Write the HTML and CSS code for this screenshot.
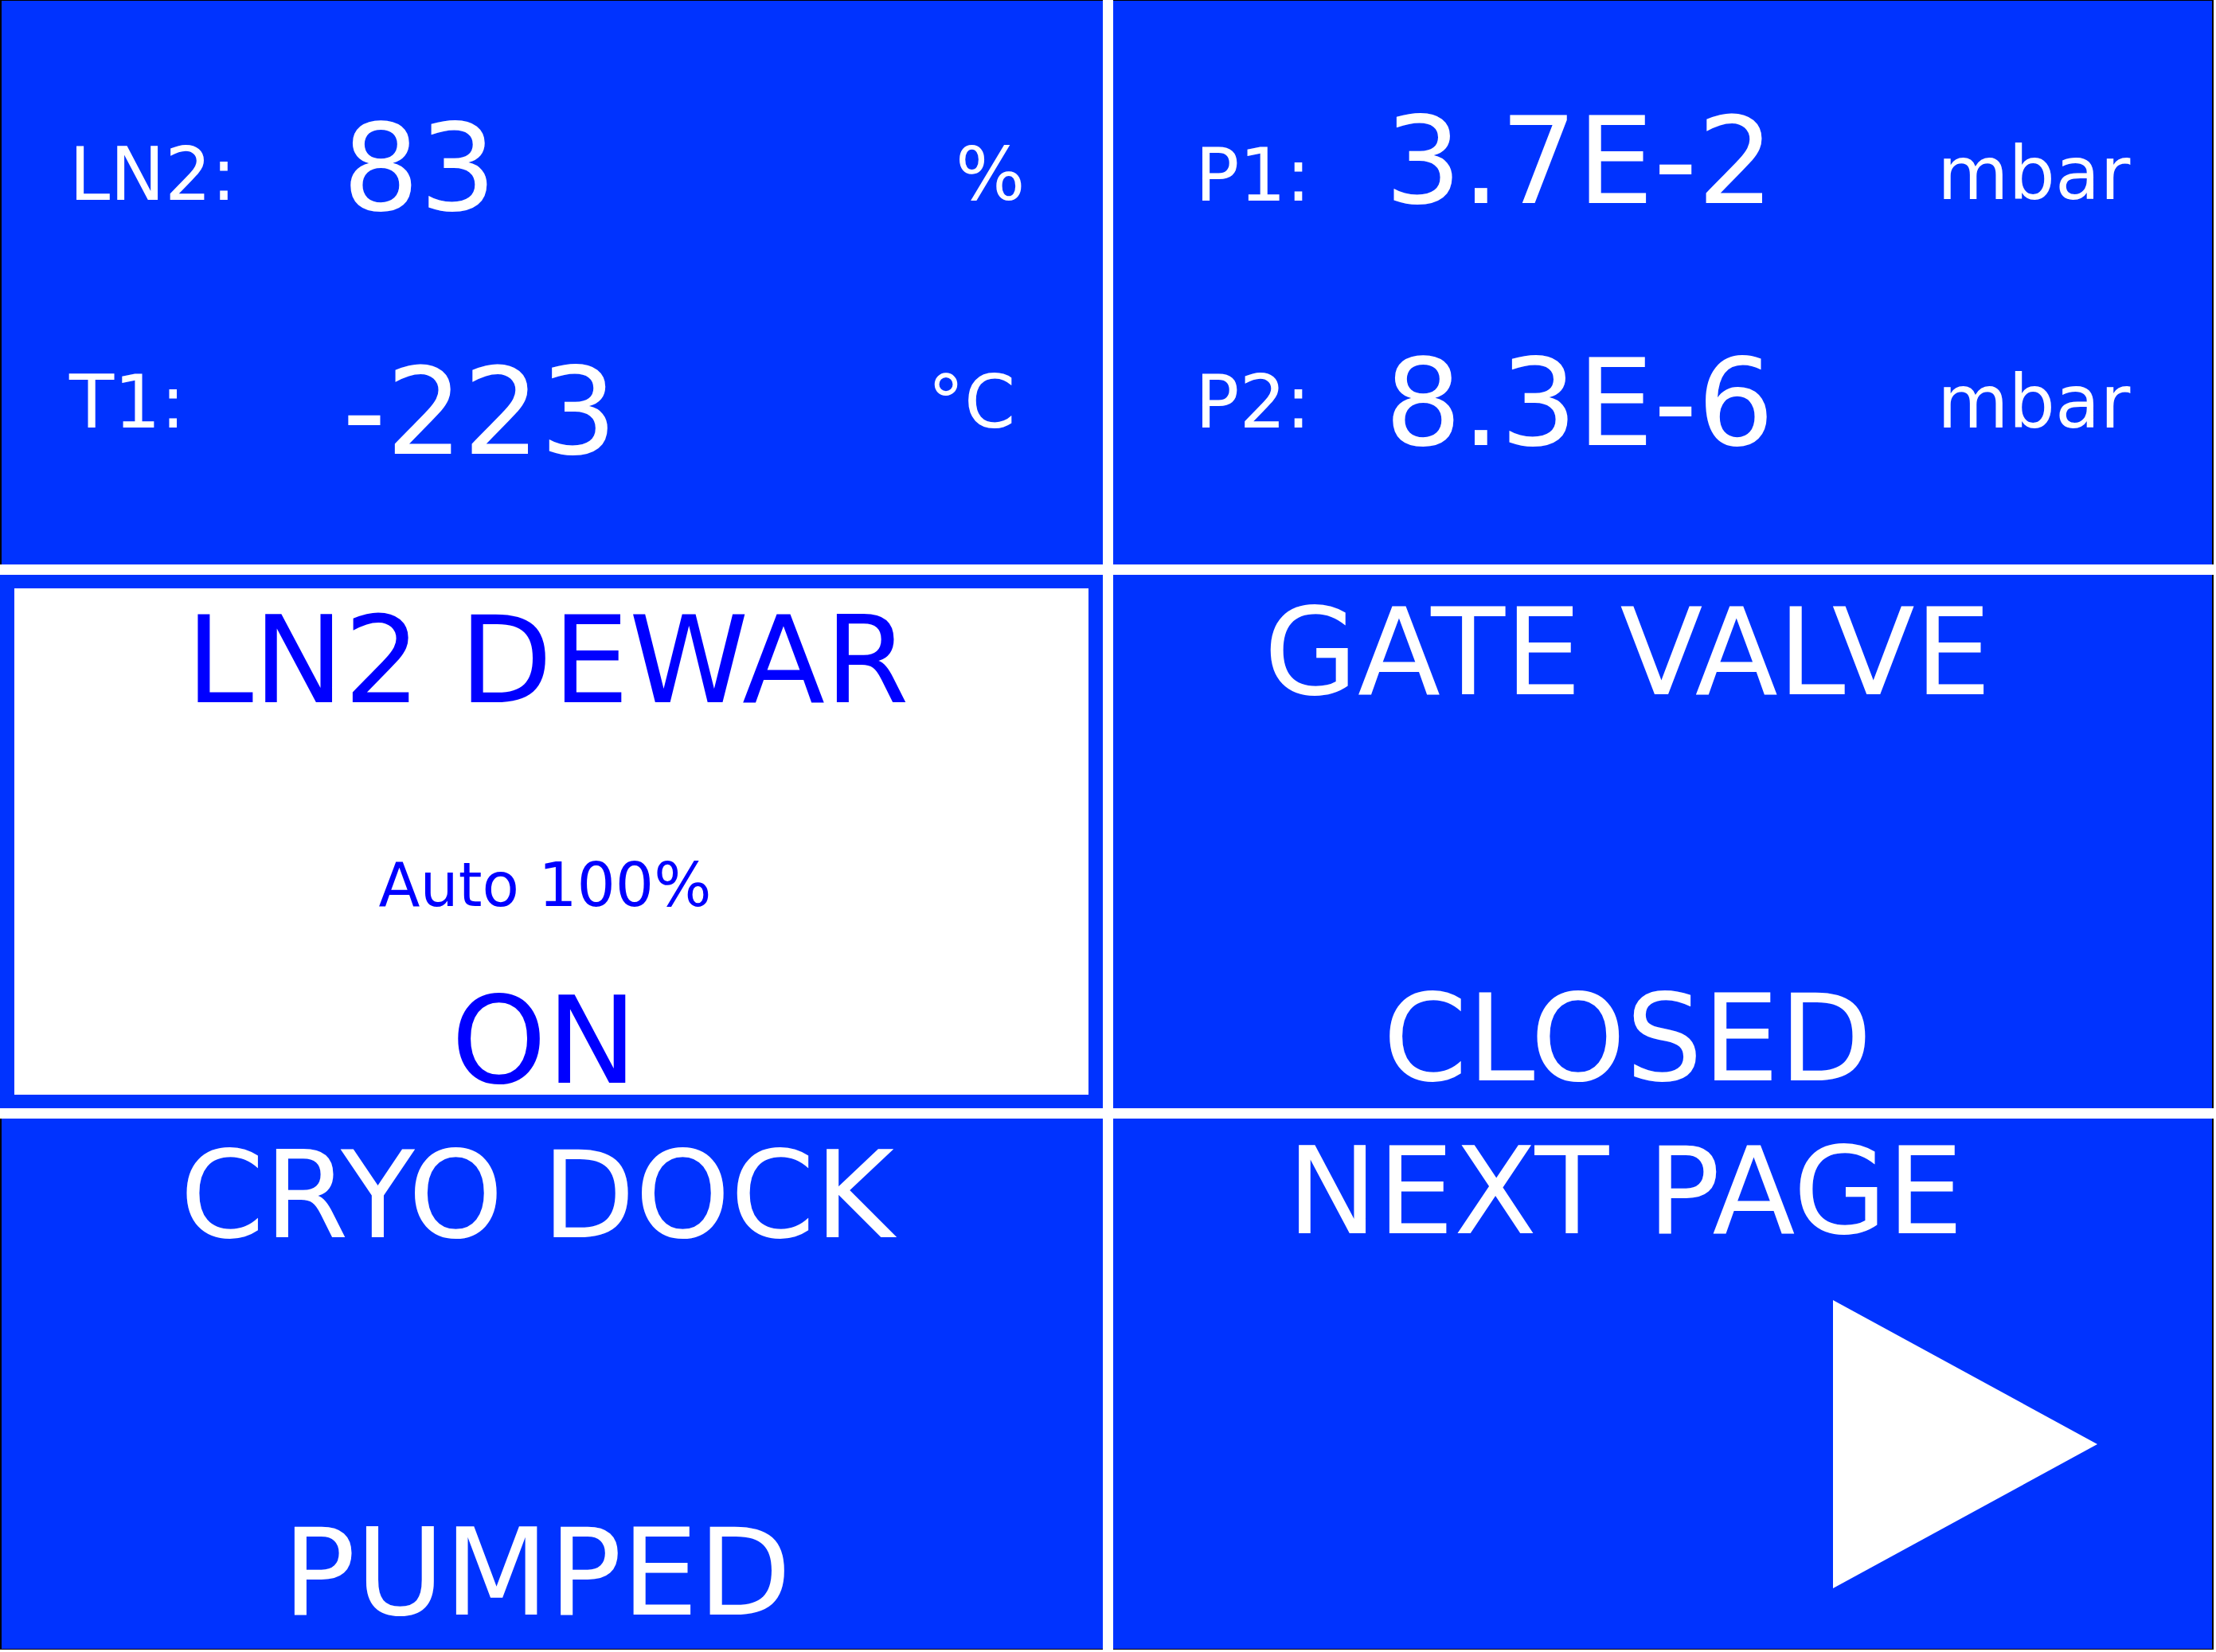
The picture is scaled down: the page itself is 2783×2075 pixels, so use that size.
FILE: index.html
```html
<!DOCTYPE html>
<html lang="en">
<head>
<meta charset="utf-8">
<title>Cryo Control</title>
<link rel="stylesheet" href="styles.css">
</head>
<body>
<main class="screen">
  <section class="panel metrics metrics-left edge-top edge-left">
    <div class="mrow row-a">
      <span class="lbl">LN2:</span><span class="val">83</span><span class="unit">%</span>
    </div>
    <div class="mrow row-b">
      <span class="lbl">T1:</span><span class="val">-223</span><span class="unit unit-deg">°C</span>
    </div>
  </section>

  <section class="panel metrics metrics-right edge-top edge-right">
    <div class="mrow row-a">
      <span class="lbl">P1:</span><span class="val">3.7E-2</span><span class="unit">mbar</span>
    </div>
    <div class="mrow row-b">
      <span class="lbl">P2:</span><span class="val">8.3E-6</span><span class="unit">mbar</span>
    </div>
  </section>

  <section class="panel dewar">
    <div class="dewar-inner">
      <div class="title dewar-title">LN2 DEWAR</div>
      <div class="dewar-mode">Auto 100%</div>
      <div class="title dewar-state">ON</div>
    </div>
  </section>

  <section class="panel button col-right edge-right gate">
    <div class="title">GATE VALVE</div>
    <div class="title state">CLOSED</div>
  </section>

  <section class="panel button col-left edge-left edge-bottom cryo">
    <div class="title">CRYO DOCK</div>
    <div class="title state">PUMPED</div>
  </section>

  <section class="panel button col-right edge-right edge-bottom next">
    <div class="title">NEXT PAGE</div>
    <div class="arrow-row">
      <svg class="arrow" width="332" height="362" viewBox="0 0 332 362" aria-hidden="true">
        <polygon points="0,0 332,181 0,362" fill="#ffffff"/>
      </svg>
    </div>
  </section>
</main>
</body>
</html>
```

FILE: styles.css
```css
* {
  box-sizing: border-box;
}

html, body {
  margin: 0;
  padding: 0;
  background: #ffffff;
}

body {
  font-family: "DejaVu Sans", "Liberation Sans", sans-serif;
  color: #ffffff;
}

.screen {
  display: grid;
  grid-template-columns: 1385px 1382px;
  grid-template-rows: 709px 670px 667px;
  gap: 13px;
  width: 2780px;
}

.panel {
  background: #0033ff;
  overflow: visible;
}

.edge-top { border-top: 1px solid #000; }
.edge-left { border-left: 2px solid #000; }
.edge-right { border-right: 2px solid #000; }
.edge-bottom { border-bottom: 1px solid #000; }

/* ---------- metric panels ---------- */
.mrow {
  display: flex;
  align-items: flex-start;
  white-space: nowrap;
}

.lbl, .unit {
  font-size: 92px;
  line-height: 1;
}

.val {
  font-size: 152px;
  line-height: 1;
}

.metrics-left {
  padding-top: 135px;
  padding-left: 85px;
}
.metrics-left .mrow { height: 306px; }
.metrics-left .lbl { width: 343px; }
.metrics-left .val { width: 770px; }
.metrics-left .row-a .lbl,
.metrics-left .row-a .unit { margin-top: 38px; }
.metrics-left .row-b .lbl,
.metrics-left .row-b .unit { margin-top: 18px; }
.metrics-left .unit-deg { margin-left: -35px; }

.metrics-right {
  padding-top: 126px;
  padding-left: 103px;
}
.metrics-right .mrow { height: 304px; }
.metrics-right .lbl { width: 238px; }
.metrics-right .val { width: 694px; }
.metrics-right .row-a .lbl { margin-top: 48px; }
.metrics-right .row-a .unit { margin-top: 46px; }
.metrics-right .row-b .lbl,
.metrics-right .row-b .unit { margin-top: 29px; }

/* ---------- big titles ---------- */
.title {
  font-size: 152px;
  line-height: 1;
  text-align: center;
  white-space: nowrap;
}

/* ---------- LN2 dewar (active) ---------- */
.dewar {
  border-style: solid;
  border-color: #0033ff;
  border-width: 17px 18px 17px 18px;
}

.dewar-inner {
  height: 100%;
  background: #ffffff;
  color: #0000ff;
  padding-top: 15px;
  padding-right: 10px;
  display: flex;
  flex-direction: column;
  align-items: stretch;
}

.dewar-mode {
  font-size: 76px;
  line-height: 1;
  text-align: center;
  margin-top: 168px;
  padding-right: 6px;
}

.dewar-state {
  margin-top: 82px;
  padding-right: 8px;
}

/* ---------- buttons ---------- */
.button {
  display: flex;
  flex-direction: column;
}

.col-left { padding-right: 38px; }
.col-right { padding-right: 88px; }

.gate { padding-top: 22px; }
.gate .state { margin-top: 333px; }

.cryo { padding-top: 21px; }
.cryo .state { margin-top: 322px; }

.next {
  padding-top: 16px;
  padding-right: 0;
}
.next .title { padding-right: 94px; }

.arrow-row {
  display: flex;
  justify-content: flex-end;
  padding-right: 144px;
  margin-top: 60px;
}

.arrow {
  display: block;
}
```
